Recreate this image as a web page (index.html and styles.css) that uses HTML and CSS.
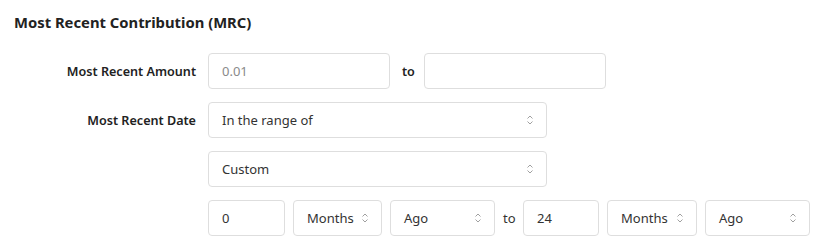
FILE: index.html
```html
<!DOCTYPE html>
<html lang="en">
<head>
<meta charset="utf-8">
<title>Most Recent Contribution</title>
<link rel="stylesheet" href="styles.css">
</head>
<body>
<section class="panel">
  <h2 class="title">Most Recent Contribution (MRC)</h2>
  <div class="form">
    <div class="label">Most Recent Amount</div>
    <div class="controls">
      <div class="field w182"><span class="placeholder">0.01</span></div>
      <span class="to-bold">to</span>
      <div class="field w182"></div>
    </div>

    <div class="label">Most Recent Date</div>
    <div class="controls">
      <div class="field select w339"><span>In the range of</span><svg class="chev" viewBox="0 0 6 10" width="6" height="10"><path d="M0.5 3.5 L3 1 L5.5 3.5 M0.5 6.5 L3 9 L5.5 6.5" fill="none" stroke="#a0a0a0" stroke-width="1"/></svg></div>
    </div>

    <div class="label"></div>
    <div class="controls">
      <div class="field select w339"><span>Custom</span><svg class="chev" viewBox="0 0 6 10" width="6" height="10"><path d="M0.5 3.5 L3 1 L5.5 3.5 M0.5 6.5 L3 9 L5.5 6.5" fill="none" stroke="#a0a0a0" stroke-width="1"/></svg></div>
    </div>

    <div class="label"></div>
    <div class="controls tight">
      <div class="field w77"><span>0</span></div>
      <div class="field select w89"><span>Months</span><svg class="chev" viewBox="0 0 6 10" width="6" height="10"><path d="M0.5 3.5 L3 1 L5.5 3.5 M0.5 6.5 L3 9 L5.5 6.5" fill="none" stroke="#a0a0a0" stroke-width="1"/></svg></div>
      <div class="field select w105"><span>Ago</span><svg class="chev" viewBox="0 0 6 10" width="6" height="10"><path d="M0.5 3.5 L3 1 L5.5 3.5 M0.5 6.5 L3 9 L5.5 6.5" fill="none" stroke="#a0a0a0" stroke-width="1"/></svg></div>
      <span class="to">to</span>
      <div class="field w76"><span>24</span></div>
      <div class="field select w90"><span>Months</span><svg class="chev" viewBox="0 0 6 10" width="6" height="10"><path d="M0.5 3.5 L3 1 L5.5 3.5 M0.5 6.5 L3 9 L5.5 6.5" fill="none" stroke="#a0a0a0" stroke-width="1"/></svg></div>
      <div class="field select w105"><span>Ago</span><svg class="chev" viewBox="0 0 6 10" width="6" height="10"><path d="M0.5 3.5 L3 1 L5.5 3.5 M0.5 6.5 L3 9 L5.5 6.5" fill="none" stroke="#a0a0a0" stroke-width="1"/></svg></div>
    </div>
  </div>
</section>
</body>
</html>
```

FILE: styles.css
```css
* { box-sizing: border-box; }
html, body {
  margin: 0;
  padding: 0;
  background: #ffffff;
}
body {
  font-family: "Noto Sans", "Open Sans", sans-serif;
  color: #333333;
  font-size: 13px;
}
.panel {
  padding: 10px 14px 0 14px;
}
.title {
  margin: 0;
  font-size: 14.8px;
  font-weight: 700;
  color: #222222;
  line-height: 24px;
}
.form {
  margin-top: 19px;
  display: grid;
  grid-template-columns: 182px auto;
  column-gap: 12px;
  row-gap: 13px;
}
.label {
  display: flex;
  align-items: center;
  justify-content: flex-end;
  font-weight: 600;
  color: #222222;
  font-size: 12.6px;
  height: 36px;
}
.controls {
  display: flex;
  align-items: center;
  height: 36px;
}
.controls.tight {
  gap: 8px;
}
.field {
  height: 36px;
  border: 1px solid #dedede;
  border-radius: 4px;
  background: #ffffff;
  display: flex;
  align-items: center;
  justify-content: space-between;
  padding: 0 12px 0 13px;
  font-size: 13px;
  color: #333333;
  white-space: nowrap;
}
.select { padding-right: 13px; }
.placeholder { color: #8a8a8a; }
.chev { flex: none; }
.to-bold {
  font-weight: 600;
  color: #222222;
  font-size: 12.6px;
  margin: 0 9px 0 12px;
}
.to {
  color: #333333;
  width: 12px;
  flex: none;
}
.w182 { width: 182px; }
.w339 { width: 339px; }
.w77 { width: 77px; }
.w76 { width: 76px; }
.w89 { width: 89px; }
.w90 { width: 90px; }
.w105 { width: 105px; }
```
